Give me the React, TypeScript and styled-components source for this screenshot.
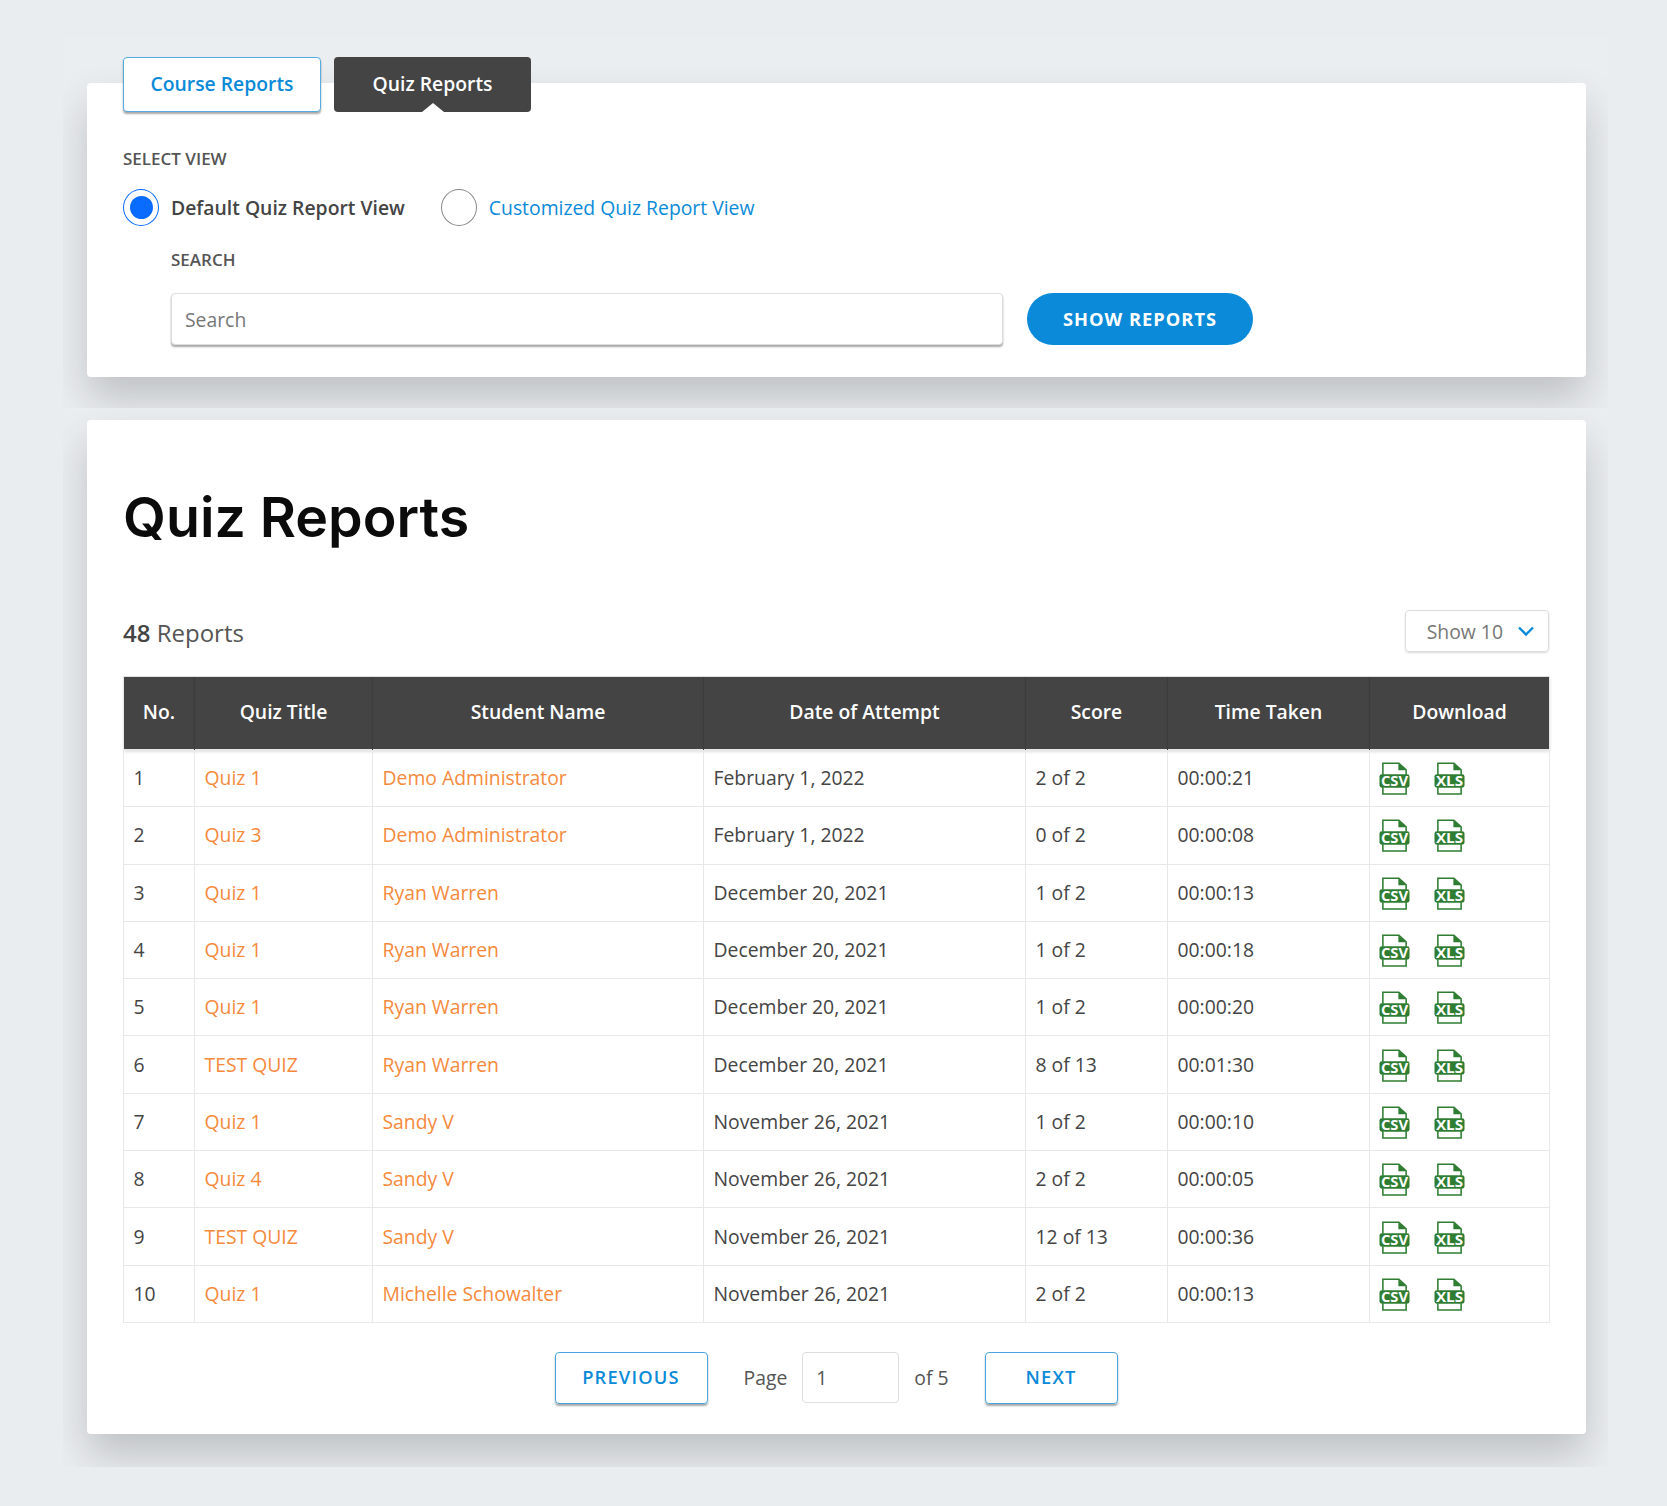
import React from 'react';
import styled, { createGlobalStyle } from 'styled-components';

const Global = createGlobalStyle`
  html, body {
    margin: 0;
    padding: 0;
    background: #e9edf0;
    font-family: "Open Sans", "Liberation Sans", sans-serif;
    color: #444;
  }
  * { box-sizing: border-box; }
`;

const Page = styled.div`
  width: 1667px;
  height: 1506px;
  padding: 38px 59px 0 63px;
`;

const ShadowClip = styled.section<{ $top: number; $bottom: number }>`
  overflow: hidden;
  background: #ebeef1;
  padding: ${(p) => p.$top}px 22px ${(p) => p.$bottom}px 24px;
`;

const Panel = styled.div`
  display: flow-root;
  position: relative;
  background: #fff;
  border-radius: 4px;
  box-shadow: 0 22px 40px rgba(50, 55, 60, 0.24);
`;

const FilterPanel = styled(Panel)`
  height: 294px;
  padding: 0 37px 0 36px;
`;

const ReportPanel = styled(Panel)`
  height: 1014px;
  padding: 61px 37px 0 36px;
`;

const Tabs = styled.div`
  display: flex;
  gap: 13px;
  margin-top: -26px;
`;

const TabBase = styled.div<{ $w: number }>`
  height: 55px;
  width: ${(p) => p.$w}px;
  padding-bottom: 2px;
  display: flex;
  align-items: center;
  justify-content: center;
  font-size: 19.35px;
  font-weight: 600;
  border-radius: 4px;
`;

const OutlineTab = styled(TabBase)`
  background: #fff;
  color: #0a8ad8;
  border: 1px solid #55acdf;
  box-shadow: 0 2px 2px rgba(0, 0, 0, 0.35);
`;

const DarkTab = styled(TabBase)`
  position: relative;
  background: #444;
  color: #fff;
  &::after {
    content: '';
    position: absolute;
    left: 50%;
    bottom: 0;
    transform: translateX(-50%);
    border-left: 11px solid transparent;
    border-right: 11px solid transparent;
    border-bottom: 9px solid #fff;
  }
`;

const SmallLabel = styled.div<{ $mt: number }>`
  font-size: 17px;
  font-weight: 600;
  line-height: 22px;
  color: #555;
  margin-top: ${(p) => p.$mt}px;
`;

const RadioRow = styled.div`
  display: flex;
  align-items: center;
  margin-top: 19px;
`;

const RadioCircle = styled.span<{ $on?: boolean }>`
  width: 36px;
  height: 37px;
  border-radius: 50%;
  flex: none;
  background: #fff;
  border: 1.5px solid ${(p) => (p.$on ? '#0a6cff' : '#888')};
  display: flex;
  align-items: center;
  justify-content: center;
  &::after {
    content: '';
    display: ${(p) => (p.$on ? 'block' : 'none')};
    width: 23px;
    height: 23px;
    border-radius: 50%;
    background: #0a6cff;
  }
`;

const RadioText = styled.span<{ $on?: boolean }>`
  font-size: 19.35px;
  font-weight: ${(p) => (p.$on ? 600 : 400)};
  color: ${(p) => (p.$on ? '#444' : '#0a8ad8')};
  margin-left: 12px;
  margin-right: 36px;
`;

const SearchBlock = styled.div`
  padding-left: 48px;
`;

const SearchRow = styled.div`
  display: flex;
  gap: 24px;
  margin-top: 22px;
`;

const SearchInput = styled.div`
  width: 832px;
  height: 52px;
  padding: 0 13px;
  display: flex;
  align-items: center;
  font-size: 19.35px;
  color: #777;
  background: #fff;
  border: 1px solid #ddd;
  border-radius: 4px;
  box-shadow: 0 2px 2px rgba(0, 0, 0, 0.35);
`;

const ShowButton = styled.div`
  width: 226px;
  height: 52px;
  padding-bottom: 2px;
  border-radius: 26px;
  background: #0a8ad8;
  color: #fff;
  font-size: 18.3px;
  font-weight: 700;
  letter-spacing: 1px;
  display: flex;
  align-items: center;
  justify-content: center;
`;

const Heading = styled.h1`
  margin: 0;
  font-family: Inter, "Liberation Sans", sans-serif;
  font-size: 55.5px;
  line-height: 71px;
  font-weight: 600;
  color: #0b0b0b;
`;

const ListBar = styled.div`
  display: flex;
  justify-content: space-between;
  align-items: center;
  margin-top: 58px;
  height: 42px;
`;

const Count = styled.div`
  font-size: 24px;
  color: #555;
  margin-top: 2px;
  b {
    font-weight: 600;
    color: #444;
  }
`;

const ShowSelect = styled.div`
  width: 144px;
  height: 42px;
  border: 1px solid #ddd;
  border-radius: 4px;
  box-shadow: 0 1px 2px rgba(0, 0, 0, 0.15);
  display: flex;
  align-items: center;
  justify-content: flex-end;
  gap: 14px;
  padding-right: 13px;
  font-size: 19.35px;
  color: #777;
`;

const Table = styled.table`
  width: 1426px;
  margin-top: 24px;
  border-collapse: collapse;
  table-layout: fixed;
`;

const Th = styled.th`
  height: 73px;
  background: #444;
  color: #fff;
  font-size: 19.35px;
  font-weight: 600;
  text-align: center;
  border-top: 1px solid #e0e0e0;
  border-left: 1px solid #3c3c3c;
  padding: 0 0 4px;
  box-shadow: 0 2px 3px rgba(0, 0, 0, 0.12);
  &:first-child { border-left: 1px solid #e8e8e8; }
  &:last-child { border-right: 1px solid #e8e8e8; }
`;

const Tr = styled.tr`
  height: 57.3px;
`;

const Td = styled.td`
  border: 1px solid #e8e8e8;
  padding: 0 10px 1px 9.5px;
  font-size: 19.35px;
  color: #444;
`;

const RowLink = styled.span`
  color: #f58a3c;
`;

const Downloads = styled.div`
  display: flex;
  gap: 24px;
  margin-left: -1px;
  padding-top: 2px;
`;

const Pager = styled.div`
  display: flex;
  align-items: center;
  justify-content: center;
  margin-top: 29px;
  font-size: 19.35px;
  color: #555;
`;

const PagerButton = styled.div<{ $w: number }>`
  width: ${(p) => p.$w}px;
  height: 52px;
  padding-bottom: 2px;
  display: flex;
  align-items: center;
  justify-content: center;
  border: 1px solid #4aa6e0;
  border-radius: 4px;
  box-shadow: 0 2px 2px rgba(0, 0, 0, 0.35);
  color: #0a8ad8;
  font-size: 18.3px;
  font-weight: 600;
  letter-spacing: 1.2px;
`;

const PageLabel = styled.span`
  margin: 0 15px 0 36px;
`;

const OfLabel = styled.span`
  margin: 0 36px 0 15px;
`;

const PageInput = styled.div`
  width: 97px;
  height: 51px;
  border: 1px solid #ddd;
  border-radius: 4px;
  padding-left: 13px;
  display: flex;
  align-items: center;
`;

const FileIcon = ({ label }: { label: string }) => (
  <svg width="31" height="33" viewBox="0 0 32 34">
    <path d="M4 13V1.2h16.5L28 8v5M4 26v7h24v-7" fill="none" stroke="#2e7d32" strokeWidth="1.6" />
    <path d="M20 1l8 7.5h-8z" fill="#2e7d32" />
    <rect x="0.5" y="12.5" width="31" height="14" rx="2.5" fill="#2e7d32" />
    <text
      x="16"
      y="24.3"
      textAnchor="middle"
      fontFamily="'Open Sans', sans-serif"
      fontSize="14.5"
      fontWeight="700"
      textLength="28"
      lengthAdjust="spacingAndGlyphs"
      fill="#fff"
    >
      {label}
    </text>
  </svg>
);

const Chevron = () => (
  <svg width="18" height="12" viewBox="0 0 18 12">
    <path d="M2 2.5l7 7 7-7" fill="none" stroke="#0a8ad8" strokeWidth="2.4" />
  </svg>
);

const headers = ['No.', 'Quiz Title', 'Student Name', 'Date of Attempt', 'Score', 'Time Taken', 'Download'];
const widths = [71, 178, 331, 322, 142, 202, 180];

const rows = [
  ['Quiz 1', 'Demo Administrator', 'February 1, 2022', '2 of 2', '00:00:21'],
  ['Quiz 3', 'Demo Administrator', 'February 1, 2022', '0 of 2', '00:00:08'],
  ['Quiz 1', 'Ryan Warren', 'December 20, 2021', '1 of 2', '00:00:13'],
  ['Quiz 1', 'Ryan Warren', 'December 20, 2021', '1 of 2', '00:00:18'],
  ['Quiz 1', 'Ryan Warren', 'December 20, 2021', '1 of 2', '00:00:20'],
  ['TEST QUIZ', 'Ryan Warren', 'December 20, 2021', '8 of 13', '00:01:30'],
  ['Quiz 1', 'Sandy V', 'November 26, 2021', '1 of 2', '00:00:10'],
  ['Quiz 4', 'Sandy V', 'November 26, 2021', '2 of 2', '00:00:05'],
  ['TEST QUIZ', 'Sandy V', 'November 26, 2021', '12 of 13', '00:00:36'],
  ['Quiz 1', 'Michelle Schowalter', 'November 26, 2021', '2 of 2', '00:00:13'],
];

export default function App() {
  return (
    <Page>
      <Global />
      <ShadowClip $top={45} $bottom={31}>
        <FilterPanel>
          <Tabs>
            <OutlineTab $w={198}>Course Reports</OutlineTab>
            <DarkTab $w={197}>Quiz Reports</DarkTab>
          </Tabs>
          <SmallLabel $mt={36}>SELECT VIEW</SmallLabel>
          <RadioRow>
            <RadioCircle $on />
            <RadioText $on>Default Quiz Report View</RadioText>
            <RadioCircle />
            <RadioText>Customized Quiz Report View</RadioText>
          </RadioRow>
          <SearchBlock>
            <SmallLabel $mt={23}>SEARCH</SmallLabel>
            <SearchRow>
              <SearchInput>Search</SearchInput>
              <ShowButton>SHOW REPORTS</ShowButton>
            </SearchRow>
          </SearchBlock>
        </FilterPanel>
      </ShadowClip>
      <ShadowClip $top={12} $bottom={33}>
        <ReportPanel>
          <Heading>Quiz Reports</Heading>
          <ListBar>
            <Count>
              <b>48</b> Reports
            </Count>
            <ShowSelect>
              Show 10
              <Chevron />
            </ShowSelect>
          </ListBar>
          <Table>
            <colgroup>
              {widths.map((w, i) => (
                <col key={i} width={w} />
              ))}
            </colgroup>
            <thead>
              <tr>
                {headers.map((h) => (
                  <Th key={h}>{h}</Th>
                ))}
              </tr>
            </thead>
            <tbody>
              {rows.map((r, i) => (
                <Tr key={i}>
                  <Td>{i + 1}</Td>
                  <Td>
                    <RowLink>{r[0]}</RowLink>
                  </Td>
                  <Td>
                    <RowLink>{r[1]}</RowLink>
                  </Td>
                  <Td>{r[2]}</Td>
                  <Td>{r[3]}</Td>
                  <Td>{r[4]}</Td>
                  <Td>
                    <Downloads>
                      <FileIcon label="CSV" />
                      <FileIcon label="XLS" />
                    </Downloads>
                  </Td>
                </Tr>
              ))}
            </tbody>
          </Table>
          <Pager>
            <PagerButton $w={153}>PREVIOUS</PagerButton>
            <PageLabel>Page</PageLabel>
            <PageInput>1</PageInput>
            <OfLabel>of 5</OfLabel>
            <PagerButton $w={133}>NEXT</PagerButton>
          </Pager>
        </ReportPanel>
      </ShadowClip>
    </Page>
  );
}
